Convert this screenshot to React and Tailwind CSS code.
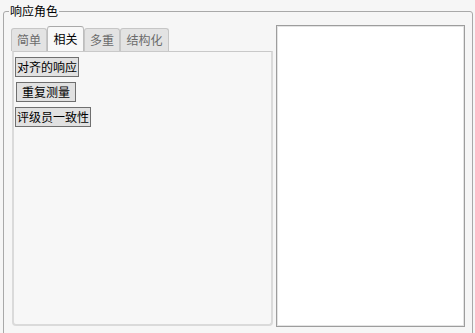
const FONT = { fontFamily: '"Noto Sans CJK SC", "Noto Sans", sans-serif' };

const tabs = [
  { label: "简单", w: "w-[36px]" },
  { label: "相关", w: "w-[37px]", active: true },
  { label: "多重", w: "w-[36px]" },
  { label: "结构化", w: "w-[49px]" },
];

function Tab({ label, w, active }) {
  return (
    <div
      className={`${w} flex items-center justify-center rounded-t-[3px] border border-b-0 text-[12px] leading-none ${
        active
          ? "h-[25px] border-[#bdbdbd] border-t-[#a9a9a9] bg-[#f8f8f8] text-black"
          : "h-[23px] border-[#c6c6c6] bg-[#e3e3e3] text-[#6b6b6b]"
      }`}
    >
      {label}
    </div>
  );
}

function ActionButton({ children, className = "" }) {
  return (
    <button
      type="button"
      className={`h-[20px] border border-[#6f6f6f] bg-[#e1e1e1] text-[12px] leading-none text-black ${className}`}
    >
      {children}
    </button>
  );
}

export default function App() {
  return (
    <div className="h-[333px] w-[475px] overflow-hidden bg-[#f6f6f6] pt-[3px] pl-[3px]" style={FONT}>
      <fieldset className="h-[345px] w-[470px] rounded-[3px] border border-[#a9a9a9] p-0">
        <legend className="ml-[5px] px-[1px] text-[12px] leading-[16px] text-black">响应角色</legend>

        <div className="flex gap-[3px] pt-[6px] pl-[7px]">
          <div className="flex w-[262px] flex-col">
            <div className="flex h-[26px] items-end">
              {tabs.map((tab) => (
                <Tab key={tab.label} {...tab} />
              ))}
            </div>
            <div className="ml-[1px] flex h-[275px] w-[261px] flex-col items-start gap-[5px] rounded-b-[4px] border-2 border-t border-[#dadada] border-t-[#c9c9c9] bg-[#f7f7f7] pt-[5px] pl-[1px]">
              <ActionButton className="px-[1px]">对齐的响应</ActionButton>
              <ActionButton className="ml-[1px] px-[5px]">重复测量</ActionButton>
              <ActionButton className="px-[1px]">评级员一致性</ActionButton>
            </div>
          </div>

          <div className="h-[302px] w-[189px] border border-[#9d9d9d] bg-white shadow-[inset_0_0_0_1px_#e4e4e4]" />
        </div>
      </fieldset>
    </div>
  );
}
